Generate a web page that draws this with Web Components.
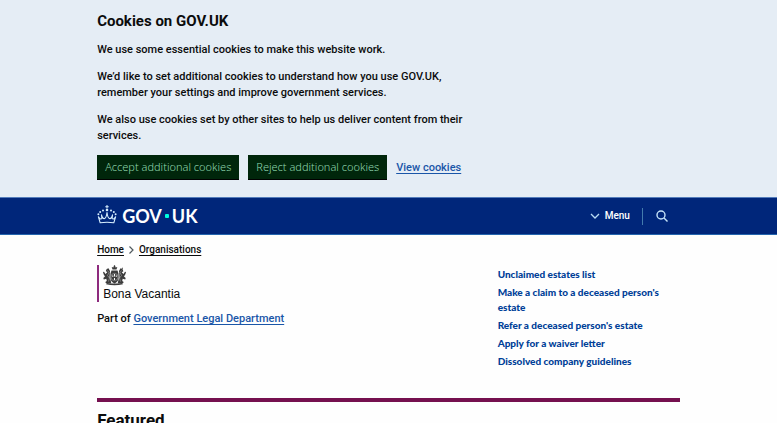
<!DOCTYPE html>
<html lang="en">
<head>
<meta charset="utf-8">
<meta name="viewport" content="width=device-width, initial-scale=1">
<title>Bona Vacantia - GOV.UK</title>
<style>
    body {
        margin: 0;
        background: #fefefe;
        color: #0b0c0c;
        font-family: Roboto, "Liberation Sans", sans-serif;
        font-size: 11px;
        font-weight: 500;
        line-height: 16px;
        --gutter: 12.5%;
        --link: #1a56a8;
        --brand: #75104f;
    }
</style>
</head>
<body>

<cookie-banner heading="Cookies on GOV.UK">
    <p>We use some essential cookies to make this website work.</p>
    <p>We’d like to set additional cookies to understand how you use GOV.UK, remember your settings and improve government services.</p>
    <p>We also use cookies set by other sites to help us deliver content from their services.</p>
</cookie-banner>
<site-header></site-header>
<organisation-page>
    <bread-crumbs slot="top">
        <a href="#home">Home</a>
        <a href="#organisations">Organisations</a>
    </bread-crumbs>
    <organisation-logo>Bona Vacantia</organisation-logo>
    <parent-organisation href="#gld" name="Government Legal Department"></parent-organisation>
    <link-list slot="side">
        <a href="#list">Unclaimed estates list</a>
        <a href="#claim">Make a claim to a deceased person's estate</a>
        <a href="#refer">Refer a deceased person's estate</a>
        <a href="#waiver">Apply for a waiver letter</a>
        <a href="#company">Dissolved company guidelines</a>
    </link-list>
    <span slot="featured">Featured</span>
</organisation-page>

<script>
class CookieBanner extends HTMLElement {
    constructor() {
        super();
        this.attachShadow({ mode: "open" }).innerHTML = `
        <style>
            :host {
                display: block;
                padding: 11px var(--gutter) 17px;
                background: #e5edf5;
            }

            .message {
                width: 64%;
                display: flex;
                flex-direction: column;
                gap: 11px;
            }

            h2 {
                margin: 0;
                font-size: 15px;
                font-weight: 700;
                line-height: 20px;
            }

            ::slotted(p) { margin: 0; }

            .actions {
                display: flex;
                align-items: center;
                gap: 9px;
                margin-top: 11px;
            }

            button {
                box-sizing: border-box;
                height: 25px;
                padding: 0 8px;
                border: 0;
                border-bottom: 1px solid #000;
                border-radius: 0;
                background: #00260b;
                color: #8fd6ae;
                font: inherit;
                font-family: "Noto Sans", sans-serif;
                font-weight: 300;
                white-space: nowrap;
            }

            a {
                color: var(--link);
                text-underline-offset: 2px;
                white-space: nowrap;
            }
        </style>
        <div class="message">
            <h2></h2>
            <slot></slot>
        </div>
        <div class="actions">
            <button type="button">Accept additional cookies</button>
            <button type="button">Reject additional cookies</button>
            <a href="#cookies">View cookies</a>
        </div>`;
    }

    connectedCallback() {
        this.shadowRoot.querySelector("h2").textContent = this.getAttribute("heading");
    }
}

class SiteHeader extends HTMLElement {
    constructor() {
        super();
        this.attachShadow({ mode: "open" }).innerHTML = `
        <style>
            :host {
                box-sizing: border-box;
                display: flex;
                justify-content: space-between;
                align-items: center;
                height: 38px;
                padding: 0 var(--gutter);
                border-top: 1px solid #547dbb;
                border-bottom: 1px solid #2465ae;
                background: #00267a;
                color: #fff;
            }

            .home {
                display: flex;
                align-items: center;
                gap: 5px;
                color: #fff;
                text-decoration: none;
            }

            .home svg { margin-bottom: 3px; }

            .word {
                display: flex;
                align-items: center;
                gap: 3px;
                font-family: Lato, sans-serif;
                font-size: 18px;
                font-weight: 700;
                line-height: 20px;
            }

            .dot {
                width: 4px;
                height: 4px;
                border-radius: 1px;
                background: #00ffe0;
            }

            nav {
                display: flex;
                align-items: center;
                padding-right: 12px;
            }

            button {
                display: flex;
                align-items: center;
                gap: 5px;
                padding: 0 12px;
                border: 0;
                background: none;
                color: #fff;
                font: inherit;
                font-size: 10px;
            }

            .search {
                padding: 0 0 0 13px;
                border-left: 1px solid #437bad;
                height: 17px;
            }

            svg { display: block; }
        </style>
        <a class="home" href="#home" aria-label="GOV.UK">
            <svg width="20" height="19" viewBox="0 0 20 19" fill="#d8f0ff">
                <path d="M9.500 0h1v1.200h1.200v1h-1.200v1.300h-1V2.200H8.300v-1h1.200z"/>
                <circle cx="10" cy="5" r="1.300"/>
                <circle cx="6" cy="5.500" r="1"/>
                <circle cx="14" cy="5.500" r="1"/>
                <circle cx="3.200" cy="7" r="1"/>
                <circle cx="16.800" cy="7" r="1"/>
                <circle cx="1.400" cy="9.300" r="1"/>
                <circle cx="18.600" cy="9.300" r="1"/>
                <g fill="none" stroke="#d8f0ff" stroke-width="1.100" stroke-linejoin="round">
                    <path d="M3.200 17.800 1.400 11.800Q3 14.800 4.900 13.600L4.500 9.800Q5.700 14.200 7.600 13.500 9.300 12.800 10 7.500 10.700 12.800 12.400 13.500 14.300 14.200 15.500 9.800L15.100 13.600Q17 14.800 18.600 11.800L16.800 17.800Q10 16.700 3.200 17.800z"/>
                </g>
            </svg>
            <span class="word"><span>GOV</span><i class="dot"></i><span>UK</span></span>
        </a>
        <nav aria-label="Main">
            <button type="button">
                <svg width="10" height="10" viewBox="0 0 10 10" fill="none" stroke="#b9dcf5" stroke-width="1.300"><path d="M1 3l4 4 4-4"/></svg>
                Menu
            </button>
            <button type="button" class="search" aria-label="Search">
                <svg width="12" height="12" viewBox="0 0 12 12" fill="none" stroke="#c5e3f8" stroke-width="1.400"><circle cx="5" cy="5" r="4"/><path d="M8 8l3.500 3.500"/></svg>
            </button>
        </nav>`;
    }
}

class OrganisationPage extends HTMLElement {
    constructor() {
        super();
        this.attachShadow({ mode: "open" }).innerHTML = `
        <style>
            :host {
                display: block;
                padding: 7px var(--gutter) 0;
            }

            .columns {
                display: grid;
                grid-template-columns: 2fr 1fr;
                gap: 36px;
                margin-top: 7px;
            }

            section {
                margin-top: 29px;
                border-top: 4px solid var(--brand);
            }

            h2 {
                margin: 0;
                padding-top: 6px;
                font-size: 17px;
                font-weight: 700;
                line-height: 24px;
            }
        </style>
        <slot name="top"></slot>
        <main class="columns">
            <div><slot></slot></div>
            <slot name="side"></slot>
        </main>
        <section>
            <h2><slot name="featured"></slot></h2>
        </section>`;
    }
}

class BreadCrumbs extends HTMLElement {
    constructor() {
        super();
        this.attachShadow({ mode: "open" }).innerHTML = `
        <style>
            :host { display: block; font-size: 10px; }

            nav {
                display: flex;
                align-items: center;
                gap: 5px;
            }

            a { color: inherit; text-underline-offset: 2px; }
        </style>
        <nav aria-label="Breadcrumb"></nav>`;
    }

    connectedCallback() {
        const nav = this.shadowRoot.querySelector("nav");
        const chevron = `<svg width="5" height="8" viewBox="0 0 5 8" fill="none" stroke="#505a5f" stroke-width="1.200"><path d="M.5.5L4 4 .5 7.500"/></svg>`;

        nav.innerHTML = [...this.children].map(link => link.outerHTML).join(chevron);
    }
}

class OrganisationLogo extends HTMLElement {
    constructor() {
        super();
        this.attachShadow({ mode: "open" }).innerHTML = `
        <style>
            :host {
                display: block;
                padding-left: 4px;
                border-left: 2px solid #8d2a7d;
                font-family: "Liberation Sans", Arial, sans-serif;
                font-size: 12px;
                font-weight: 400;
                line-height: 16px;
            }

            svg { display: block; }

            h1 {
                margin: 0;
                font: inherit;
            }
        </style>
        <svg width="23" height="21" viewBox="0 0 23 21" fill="#3c3c3c" aria-hidden="true">
            <path d="M9.500 4.500 8.700 2l1.700.6L11 .3h1l.6 2.300 1.700-.6-.8 2.500z"/>
            <path fill-rule="evenodd" d="M8.500 5.500h6l1 3 .2 4q-.4 4.500-4.200 6-3.800-1.500-4.200-6l.2-4zM11 9v2.500h1V9zM9.200 10.400v1.300h1.200v-1.300zM12.700 10.400v1.300h1.200v-1.300zM11 13v2h1v-2z"/>
            <path d="M7 6 5.500 3.300 3.700 4 2.800 6l1.500 1.300L2.500 9 1 6.800 0 7l.6 2.300L2 11.400.3 13l.5 1.500 2.500-.7.5 2.200-1.500 1 .7 1.200 5.300.3-.6-3-1.200-2.800z"/>
            <path d="M16 6l1.500-2.700 1 .4L20 2.300l-.4 2.200.8 1.700-1.700 1L20.500 9 22 6.800l1 .2-.6 2.300-1.400 2.100 1.700 1.600-.5 1.500-2.500-.7-.5 2.200 1.500 1-.7 1.200-5.300.3.6-3 1.200-2.800z"/>
            <path d="M4 18q7.500 1 15 0l1 1.200q-8.500 2-17 0z"/>
            <g fill="none" stroke="#aaa" stroke-width=".6"><path d="M4.500 5.500l1.500 2-1.500 3 2 2.500-1 3.500M18.500 5.500l-1.500 2 1.500 3-2 2.500 1 3.500"/><circle cx="11.500" cy="12" r="3.600"/></g>
        </svg>
        <h1><slot></slot></h1>`;
    }
}

class ParentOrganisation extends HTMLElement {
    constructor() {
        super();
        this.attachShadow({ mode: "open" }).innerHTML = `
        <style>
            :host { display: block; margin-top: 9px; }
            p { margin: 0; }
            a { color: var(--link); text-underline-offset: 2px; }
        </style>
        <p>Part of <a></a></p>`;
    }

    connectedCallback() {
        const link = this.shadowRoot.querySelector("a");
        link.href = this.getAttribute("href");
        link.textContent = this.getAttribute("name");
    }
}

class LinkList extends HTMLElement {
    constructor() {
        super();
        this.attachShadow({ mode: "open" }).innerHTML = `
        <style>
            :host {
                display: flex;
                flex-direction: column;
                gap: 3px;
                padding-top: 2px;
                font-family: Lato, sans-serif;
                font-size: 10px;
                font-weight: 900;
                line-height: 15px;
            }

            ::slotted(a) {
                color: #003f98;
                text-decoration: none;
            }
        </style>
        <slot></slot>`;
    }
}

customElements.define("cookie-banner", CookieBanner);
customElements.define("site-header", SiteHeader);
customElements.define("organisation-page", OrganisationPage);
customElements.define("bread-crumbs", BreadCrumbs);
customElements.define("organisation-logo", OrganisationLogo);
customElements.define("parent-organisation", ParentOrganisation);
customElements.define("link-list", LinkList);
</script>
</body>
</html>
